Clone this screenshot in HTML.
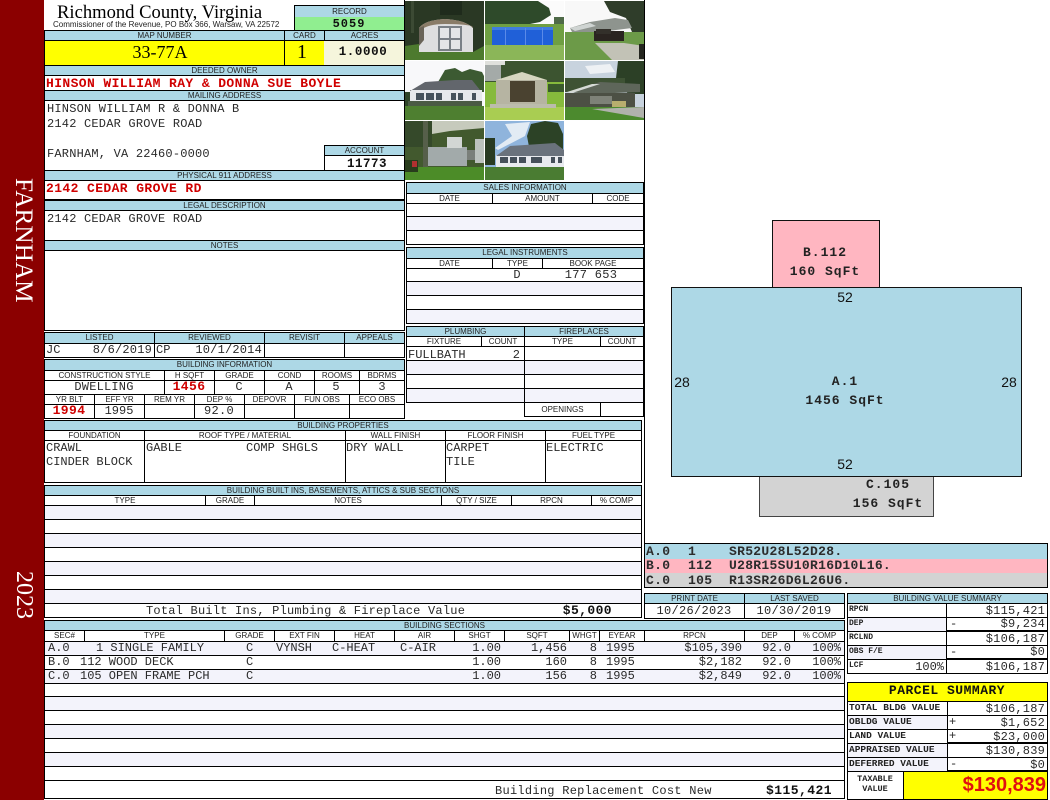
<!DOCTYPE html>
<html><head><meta charset="utf-8"><title>Richmond County, Virginia</title>
<style>
html,body{margin:0;padding:0;background:#fff}
body{position:relative;width:1050px;height:800px;overflow:hidden}
div,span,svg{position:absolute;box-sizing:border-box}
.h{background:#add8e6;border:1px solid #000;font:8px/9px "Liberation Sans",sans-serif;text-align:center;color:#222;white-space:nowrap}
.s{background:#fff;border:1px solid #000;font:8px/9px "Liberation Sans",sans-serif;text-align:center;color:#222;white-space:nowrap}
.c{background:#fff;border:1px solid #000}
.a{background:#f3f3fb;border:1px solid #000}
.t{font:12px/14px "Liberation Mono",monospace;color:#2a2a2a;white-space:pre}
.b{font-weight:bold;color:#111}
.x{font:bold 13px/14px "Liberation Mono",monospace;color:#d00000;letter-spacing:.4px;white-space:pre}
.m{transform:translateX(-50%)}
.k{font:bold 8px/10px "Liberation Mono",monospace;color:#222;white-space:pre}
.f{font:bold 13px/15px "Liberation Mono",monospace;color:#2c2c2c;letter-spacing:.3px;white-space:pre}
.g{font:bold 13px/15px "Liberation Mono",monospace;color:#222;letter-spacing:1px;white-space:pre;transform:translateX(-50%)}
.n{font:14px/15px "Liberation Sans",sans-serif;color:#111;white-space:pre;transform:translateX(-50%)}
</style></head><body>

<!-- sidebar -->
<div style="left:0;top:0;width:44px;height:800px;background:#8b0000"></div>
<div style="left:9px;top:178px;width:30px;height:130px;writing-mode:vertical-rl;font:25.3px/30px 'Liberation Serif',serif;color:#fff;white-space:nowrap">FARNHAM</div>
<div style="left:9px;top:571px;width:30px;height:60px;writing-mode:vertical-rl;font:24px/30px 'Liberation Serif',serif;color:#fff;white-space:nowrap">2023</div>

<!-- title -->
<span style="left:57px;top:2px;font:18.6px/21px 'Liberation Serif',serif;color:#000;white-space:nowrap">Richmond County, Virginia</span>
<span style="left:53px;top:20px;font:8px/10px 'Liberation Sans',sans-serif;color:#222;white-space:nowrap">Commissioner of the Revenue, PO Box 366, Warsaw, VA 22572</span>
<div class="h" style="left:294px;top:5px;width:111px;height:13px;line-height:11px">RECORD</div>
<div style="left:294px;top:17px;width:111px;height:14px;background:#90ee90;border-left:1px solid #000"></div>
<span class="t b m" style="left:349px;top:17px;letter-spacing:1px">5059</span>

<!-- map row -->
<div class="h" style="left:44px;top:30px;width:241px;height:11px">MAP NUMBER</div>
<div class="h" style="left:284px;top:30px;width:41px;height:11px">CARD</div>
<div class="h" style="left:324px;top:30px;width:81px;height:11px">ACRES</div>
<div style="left:44px;top:40px;width:241px;height:26px;background:#ffff00;border:1px solid #000"></div>
<div style="left:284px;top:40px;width:41px;height:26px;background:#ffff00;border:1px solid #000"></div>
<div style="left:324px;top:40px;width:81px;height:26px;background:#f5f5dc;border:1px solid #000;border-left:0"></div>
<span class="m" style="left:160px;top:42px;font:18px/21px 'Liberation Serif',serif;color:#000">33-77A</span>
<span class="m" style="left:302px;top:41px;font:20px/23px 'Liberation Serif',serif;color:#000">1</span>
<span class="t b m" style="left:363px;top:45px;font-size:12.5px;letter-spacing:.6px">1.0000</span>

<!-- owner -->
<div class="c" style="left:44px;top:65px;width:361px;height:135px"></div>
<div class="h" style="left:44px;top:65px;width:361px;height:11px">DEEDED OWNER</div>
<span class="x" style="left:46px;top:77px">HINSON WILLIAM RAY &amp; DONNA SUE BOYLE</span>
<div class="h" style="left:44px;top:90px;width:361px;height:11px">MAILING ADDRESS</div>
<span class="t" style="left:47px;top:102px;letter-spacing:.2px">HINSON WILLIAM R &amp; DONNA B</span>
<span class="t" style="left:47px;top:117px;letter-spacing:.2px">2142 CEDAR GROVE ROAD</span>
<span class="t" style="left:47px;top:147px;letter-spacing:.2px">FARNHAM, VA 22460-0000</span>
<div class="h" style="left:324px;top:145px;width:81px;height:11px">ACCOUNT</div>
<div class="c" style="left:324px;top:155px;width:81px;height:16px"></div>
<span class="t b m" style="left:367px;top:157px;letter-spacing:.5px;font-size:12.5px">11773</span>
<div class="h" style="left:44px;top:170px;width:361px;height:11px">PHYSICAL 911 ADDRESS</div>
<span class="x" style="left:46px;top:182px">2142 CEDAR GROVE RD</span>

<!-- legal/notes -->
<div class="c" style="left:44px;top:200px;width:361px;height:41px"></div>
<div class="h" style="left:44px;top:200px;width:361px;height:11px">LEGAL DESCRIPTION</div>
<span class="t" style="left:47px;top:212px;letter-spacing:.2px">2142 CEDAR GROVE ROAD</span>
<div class="c" style="left:44px;top:240px;width:361px;height:91px"></div>
<div class="h" style="left:44px;top:240px;width:361px;height:11px">NOTES</div>

<!-- listed -->
<div class="h" style="left:44px;top:332px;width:111px;height:12px">LISTED</div>
<div class="h" style="left:154px;top:332px;width:111px;height:12px">REVIEWED</div>
<div class="h" style="left:264px;top:332px;width:81px;height:12px">REVISIT</div>
<div class="h" style="left:344px;top:332px;width:61px;height:12px">APPEALS</div>
<div class="c" style="left:44px;top:343px;width:111px;height:15px"></div>
<div class="c" style="left:154px;top:343px;width:111px;height:15px"></div>
<div class="c" style="left:264px;top:343px;width:81px;height:15px"></div>
<div class="c" style="left:344px;top:343px;width:61px;height:15px"></div>
<span class="t" style="left:46px;top:343px">JC</span>
<span class="t" style="right:898px;top:343px;letter-spacing:.2px">8/6/2019</span>
<span class="t" style="left:156px;top:343px">CP</span>
<span class="t" style="right:788px;top:343px;letter-spacing:.2px">10/1/2014</span>

<!-- building information -->
<div class="h" style="left:44px;top:359px;width:361px;height:12px">BUILDING INFORMATION</div>
<div class="s" style="left:44px;top:370px;width:121px;height:11px">CONSTRUCTION STYLE</div>
<div class="s" style="left:164px;top:370px;width:51px;height:11px">H SQFT</div>
<div class="s" style="left:214px;top:370px;width:51px;height:11px">GRADE</div>
<div class="s" style="left:264px;top:370px;width:51px;height:11px">COND</div>
<div class="s" style="left:314px;top:370px;width:46px;height:11px">ROOMS</div>
<div class="s" style="left:359px;top:370px;width:46px;height:11px">BDRMS</div>
<div class="c" style="left:44px;top:380px;width:121px;height:15px"></div>
<div class="c" style="left:164px;top:380px;width:51px;height:15px"></div>
<div class="c" style="left:214px;top:380px;width:51px;height:15px"></div>
<div class="c" style="left:264px;top:380px;width:51px;height:15px"></div>
<div class="c" style="left:314px;top:380px;width:46px;height:15px"></div>
<div class="c" style="left:359px;top:380px;width:46px;height:15px"></div>
<span class="t m" style="left:104px;top:380px;letter-spacing:.2px">DWELLING</span>
<span class="x m" style="left:189px;top:380px">1456</span>
<span class="t m" style="left:239px;top:380px">C</span>
<span class="t m" style="left:289px;top:380px">A</span>
<span class="t m" style="left:336px;top:380px">5</span>
<span class="t m" style="left:382px;top:380px">3</span>
<div class="s" style="left:44px;top:394px;width:51px;height:11px">YR BLT</div>
<div class="s" style="left:94px;top:394px;width:51px;height:11px">EFF YR</div>
<div class="s" style="left:144px;top:394px;width:51px;height:11px">REM YR</div>
<div class="s" style="left:194px;top:394px;width:51px;height:11px">DEP %</div>
<div class="s" style="left:244px;top:394px;width:51px;height:11px">DEPOVR</div>
<div class="s" style="left:294px;top:394px;width:56px;height:11px">FUN OBS</div>
<div class="s" style="left:349px;top:394px;width:56px;height:11px">ECO OBS</div>
<div class="c" style="left:44px;top:404px;width:51px;height:15px"></div>
<div class="c" style="left:94px;top:404px;width:51px;height:15px"></div>
<div class="c" style="left:144px;top:404px;width:51px;height:15px"></div>
<div class="c" style="left:194px;top:404px;width:51px;height:15px"></div>
<div class="c" style="left:244px;top:404px;width:51px;height:15px"></div>
<div class="c" style="left:294px;top:404px;width:56px;height:15px"></div>
<div class="c" style="left:349px;top:404px;width:56px;height:15px"></div>
<span class="x m" style="left:69px;top:404px">1994</span>
<span class="t m" style="left:119px;top:404px">1995</span>
<span class="t m" style="left:219px;top:404px;letter-spacing:.3px">92.0</span>

<!-- photos -->
<svg style="left:405px;top:0" width="240" height="181" viewBox="405 0 240 181">
<defs>
<clipPath id="p1"><rect x="405" y="1" width="79" height="59"/></clipPath>
<clipPath id="p2"><rect x="485" y="1" width="79" height="59"/></clipPath>
<clipPath id="p3"><rect x="565" y="1" width="79" height="59"/></clipPath>
<clipPath id="p4"><rect x="405" y="61" width="79" height="59"/></clipPath>
<clipPath id="p5"><rect x="485" y="61" width="79" height="59"/></clipPath>
<clipPath id="p6"><rect x="565" y="61" width="79" height="59"/></clipPath>
<clipPath id="p7"><rect x="405" y="121" width="79" height="59"/></clipPath>
<clipPath id="p8"><rect x="485" y="121" width="79" height="59"/></clipPath>
</defs>
<rect x="405" y="0" width="240" height="181" fill="#fff"/>
<!-- 1 shed -->
<g clip-path="url(#p1)">
<rect x="405" y="1" width="79" height="59" fill="#2a3824"/>
<rect x="440" y="1" width="22" height="14" fill="#1f2b1c"/>
<rect x="411" y="1" width="3" height="32" fill="#3c4a34"/>
<path d="M405 46L419 44V52L473 52L484 46V60H405Z" fill="#4d7a2e"/>
<path d="M419 28Q425 20 445 19Q465 20 473 28V52H419Z" fill="#dededf"/>
<path d="M419 28Q425 20 445 19Q465 20 473 28L472 26Q462 24 445 24Q428 24 421 30Z" fill="#8a7c68"/>
<path d="M419 28L424 26V40L419 46Z" fill="#6a6458"/>
<rect x="438" y="26" width="24" height="25" fill="#7a8086"/>
<rect x="440" y="28" width="9" height="10" fill="#e4e5e7"/><rect x="451" y="28" width="9" height="10" fill="#e4e5e7"/>
<rect x="440" y="40" width="9" height="9" fill="#e4e5e7"/><rect x="451" y="40" width="9" height="9" fill="#e4e5e7"/>
</g>
<!-- 2 pool -->
<g clip-path="url(#p2)">
<rect x="485" y="1" width="79" height="59" fill="#fbfbfb"/>
<path d="M485 1H538L549 8L551 15L540 22L525 25H485Z" fill="#2e4a2a"/>
<rect x="554" y="17" width="10" height="9" fill="#4f6a48"/>
<rect x="485" y="24" width="79" height="22" fill="#6f9f42"/>
<rect x="485" y="45" width="79" height="15" fill="#8bb658"/>
<rect x="492" y="28" width="61" height="17" fill="#2060d8"/>
<rect x="492" y="27" width="61" height="3" fill="#3f7ce0"/>
<rect x="505" y="28" width="1" height="17" fill="#5a8ae8"/><rect x="525" y="28" width="1" height="17" fill="#5a8ae8"/><rect x="542" y="28" width="1" height="17" fill="#5a8ae8"/>
</g>
<!-- 3 carport -->
<g clip-path="url(#p3)">
<rect x="565" y="1" width="79" height="59" fill="#f8f8f8"/>
<path d="M604 1H644V36L632 32L626 18L610 12Z" fill="#2f3d2a"/>
<rect x="565" y="32" width="79" height="28" fill="#6c9a48"/>
<path d="M570 28L590 22L615 18L628 20L632 28L600 32H572Z" fill="#8e948e"/>
<path d="M570 28L590 23L596 26L575 31Z" fill="#cfd4d2"/>
<path d="M595 43L624 43L644 46V60H612Z" fill="#c2c2b6"/>
<rect x="594" y="31" width="30" height="10" fill="#2a2420"/>
<rect x="596" y="29" width="15" height="5" fill="#33302a"/>
<rect x="639" y="44" width="5" height="15" fill="#24261f"/>
</g>
<!-- 4 house -->
<g clip-path="url(#p4)">
<rect x="405" y="61" width="79" height="59" fill="#f8f8fa"/>
<path d="M438 82L445 70L455 68L462 72L470 69L482 72L484 76V92H438Z" fill="#3c5a32"/>
<rect x="405" y="92" width="5" height="14" fill="#2e4428"/>
<rect x="410" y="90" width="72" height="17" fill="#e6e8ec"/>
<path d="M410 91L425 82L455 80L472 80L480 90H410Z" fill="#62666c"/>
<rect x="416" y="93" width="8" height="7" fill="#46525c"/><rect x="426" y="93" width="8" height="7" fill="#46525c"/><rect x="436" y="93" width="6" height="7" fill="#46525c"/><rect x="451" y="93" width="5" height="7" fill="#46525c"/><rect x="458" y="93" width="5" height="7" fill="#46525c"/><rect x="472" y="93" width="4" height="7" fill="#46525c"/>
<rect x="408" y="101" width="74" height="5" fill="#4a5a44"/>
<rect x="405" y="106" width="79" height="14" fill="#4e7f30"/>
</g>
<!-- 5 concrete shed -->
<g clip-path="url(#p5)">
<rect x="485" y="61" width="79" height="59" fill="#3c5430"/>
<rect x="485" y="64" width="16" height="17" fill="#a4aaa8"/>
<rect x="485" y="61" width="20" height="4" fill="#dfe0dc"/>
<rect x="485" y="82" width="79" height="26" fill="#86ba3c"/>
<rect x="548" y="84" width="16" height="8" fill="#3a5a2c"/>
<rect x="485" y="107" width="79" height="13" fill="#a9cd52"/>
<path d="M496 80L522 72L547 80Z" fill="#d6d6c0"/>
<rect x="496" y="80" width="51" height="26" fill="#b6b4a2"/>
<rect x="510" y="81" width="25" height="21" fill="#4a4230"/>
<rect x="490" y="104" width="66" height="4" fill="#bcbcac"/>
</g>
<!-- 6 carport 2 -->
<g clip-path="url(#p6)">
<rect x="565" y="61" width="79" height="59" fill="#c8d3de"/>
<path d="M585 66L610 64L615 72L590 74Z" fill="#eef1f4"/>
<path d="M618 61H644V94H628L616 78Z" fill="#2c4026"/>
<rect x="565" y="78" width="60" height="14" fill="#3e5234"/>
<path d="M567 92L600 82L640 84V92L590 94Z" fill="#5e665a"/>
<path d="M567 92L592 84L600 84L572 93Z" fill="#d6dad6"/>
<rect x="565" y="93" width="70" height="14" fill="#4c5044"/>
<rect x="590" y="96" width="22" height="8" fill="#7e8278"/>
<rect x="612" y="101" width="14" height="7" fill="#b8ae6e"/>
<rect x="565" y="107" width="79" height="13" fill="#4c8a2e"/>
<path d="M592 109L644 107V118Z" fill="#b0b2ac"/>
</g>
<!-- 7 silo building -->
<g clip-path="url(#p7)">
<rect x="405" y="121" width="79" height="59" fill="#c6cabc"/>
<path d="M405 121H432V134L450 131L484 128V168H405Z" fill="#42592e"/>
<rect x="405" y="121" width="27" height="26" fill="#35492a"/>
<rect x="428" y="147" width="39" height="19" fill="#a2aaaa"/>
<rect x="447" y="137" width="15" height="11" fill="#d2d6d4"/>
<rect x="467" y="150" width="8" height="10" fill="#7a7f7a"/>
<rect x="475" y="139" width="9" height="24" fill="#bcc2be"/>
<rect x="423" y="121" width="5" height="54" fill="#565f4a"/>
<rect x="405" y="167" width="79" height="13" fill="#4c8c28"/>
<rect x="405" y="160" width="13" height="12" fill="#283c1c"/>
<rect x="412" y="161" width="5" height="6" fill="#b03030"/>
</g>
<!-- 8 house 2 -->
<g clip-path="url(#p8)">
<rect x="485" y="121" width="79" height="59" fill="#8fb4dc"/>
<path d="M505 124L530 122L525 136L498 150L495 148L512 136Z" fill="#e2ebf4"/>
<path d="M527 136L531 124L545 121L558 123L563 134V152H530Z" fill="#2c4226"/>
<rect x="485" y="138" width="10" height="27" fill="#283a22"/>
<rect x="496" y="155" width="68" height="13" fill="#e8eaee"/>
<path d="M496 156L510 146L555 143L564 150V156Z" fill="#6a727c"/>
<rect x="500" y="157" width="8" height="6" fill="#46505a"/><rect x="510" y="157" width="7" height="6" fill="#46505a"/><rect x="519" y="157" width="7" height="6" fill="#46505a"/><rect x="531" y="157" width="11" height="6" fill="#46505a"/><rect x="551" y="157" width="4" height="6" fill="#46505a"/><rect x="558" y="157" width="4" height="6" fill="#46505a"/>
<rect x="485" y="167" width="79" height="13" fill="#4a7c32"/>
</g>
</svg>
<div style="left:404px;top:0;width:1px;height:182px;background:#000"></div>
<div style="left:644px;top:0;width:1px;height:544px;background:#000"></div>

<!-- sales -->
<div class="c" style="left:406px;top:182px;width:238px;height:63px"></div>
<div class="h" style="left:406px;top:182px;width:238px;height:12px">SALES INFORMATION</div>
<div class="s" style="left:406px;top:193px;width:87px;height:11px">DATE</div>
<div class="s" style="left:492px;top:193px;height:11px;width:101px">AMOUNT</div>
<div class="s" style="left:592px;top:193px;width:52px;height:11px">CODE</div>
<div class="a" style="left:406px;top:216px;width:238px;height:15px"></div>

<!-- legal instruments -->
<div class="c" style="left:406px;top:247px;width:238px;height:77px"></div>
<div class="h" style="left:406px;top:247px;width:238px;height:12px">LEGAL INSTRUMENTS</div>
<div class="s" style="left:406px;top:258px;width:87px;height:11px">DATE</div>
<div class="s" style="left:492px;top:258px;width:51px;height:11px">TYPE</div>
<div class="s" style="left:542px;top:258px;width:102px;height:11px">BOOK PAGE</div>
<div class="a" style="left:406px;top:281px;width:238px;height:15px"></div>
<div class="a" style="left:406px;top:309px;width:238px;height:15px"></div>
<div class="c" style="left:406px;top:295px;width:238px;height:15px"></div>
<span class="t m" style="left:517px;top:268px">D</span>
<span class="t m" style="left:591px;top:268px;letter-spacing:.3px">177 653</span>

<!-- plumbing / fireplaces -->
<div class="h" style="left:406px;top:326px;width:119px;height:11px">PLUMBING</div>
<div class="h" style="left:524px;top:326px;width:120px;height:11px">FIREPLACES</div>
<div class="s" style="left:406px;top:336px;width:76px;height:11px">FIXTURE</div>
<div class="s" style="left:481px;top:336px;width:44px;height:11px">COUNT</div>
<div class="s" style="left:524px;top:336px;width:77px;height:11px">TYPE</div>
<div class="s" style="left:600px;top:336px;width:44px;height:11px">COUNT</div>
<div class="c" style="left:406px;top:346px;width:119px;height:15px"></div>
<div class="a" style="left:406px;top:360px;width:119px;height:15px"></div>
<div class="c" style="left:406px;top:374px;width:119px;height:15px"></div>
<div class="a" style="left:406px;top:388px;width:119px;height:15px"></div>
<div class="c" style="left:524px;top:346px;width:120px;height:15px"></div>
<div class="a" style="left:524px;top:360px;width:120px;height:15px"></div>
<div class="c" style="left:524px;top:374px;width:120px;height:15px"></div>
<div class="a" style="left:524px;top:388px;width:120px;height:15px"></div>
<div class="s" style="left:524px;top:402px;width:77px;height:15px;line-height:13px">OPENINGS</div>
<div class="c" style="left:600px;top:402px;width:44px;height:15px"></div>
<span class="t" style="left:408px;top:348px">FULLBATH</span>
<span class="t" style="right:530px;top:348px">2</span>

<!-- building properties -->
<div class="c" style="left:44px;top:420px;width:598px;height:63px"></div>
<div class="h" style="left:44px;top:420px;width:598px;height:11px">BUILDING PROPERTIES</div>
<div class="s" style="left:44px;top:430px;width:101px;height:11px">FOUNDATION</div>
<div class="s" style="left:144px;top:430px;width:202px;height:11px">ROOF TYPE / MATERIAL</div>
<div class="s" style="left:345px;top:430px;width:101px;height:11px">WALL FINISH</div>
<div class="s" style="left:445px;top:430px;width:101px;height:11px">FLOOR FINISH</div>
<div class="s" style="left:545px;top:430px;width:97px;height:11px">FUEL TYPE</div>
<div style="left:144px;top:440px;width:1px;height:43px;background:#000"></div>
<div style="left:345px;top:440px;width:1px;height:43px;background:#000"></div>
<div style="left:445px;top:440px;width:1px;height:43px;background:#000"></div>
<div style="left:545px;top:440px;width:1px;height:43px;background:#000"></div>
<span class="t" style="left:46px;top:441px">CRAWL</span>
<span class="t" style="left:46px;top:455px">CINDER BLOCK</span>
<span class="t" style="left:146px;top:441px">GABLE</span>
<span class="t" style="left:246px;top:441px">COMP SHGLS</span>
<span class="t" style="left:346px;top:441px">DRY WALL</span>
<span class="t" style="left:446px;top:441px">CARPET</span>
<span class="t" style="left:446px;top:455px">TILE</span>
<span class="t" style="left:546px;top:441px">ELECTRIC</span>

<!-- built-ins -->
<div class="c" style="left:44px;top:485px;width:598px;height:133px"></div>
<div class="h" style="left:44px;top:485px;width:598px;height:11px">BUILDING BUILT INS, BASEMENTS, ATTICS &amp; SUB SECTIONS</div>
<div class="s" style="left:44px;top:495px;width:162px;height:11px">TYPE</div>
<div class="s" style="left:205px;top:495px;width:50px;height:11px">GRADE</div>
<div class="s" style="left:254px;top:495px;width:188px;height:11px">NOTES</div>
<div class="s" style="left:441px;top:495px;width:71px;height:11px">QTY / SIZE</div>
<div class="s" style="left:511px;top:495px;width:81px;height:11px">RPCN</div>
<div class="s" style="left:591px;top:495px;width:51px;height:11px">% COMP</div>
<div class="a" style="left:44px;top:505px;width:598px;height:15px"></div>
<div class="c" style="left:44px;top:519px;width:598px;height:15px"></div>
<div class="a" style="left:44px;top:533px;width:598px;height:15px"></div>
<div class="c" style="left:44px;top:547px;width:598px;height:15px"></div>
<div class="a" style="left:44px;top:561px;width:598px;height:15px"></div>
<div class="c" style="left:44px;top:575px;width:598px;height:15px"></div>
<div class="a" style="left:44px;top:589px;width:598px;height:15px"></div>
<span class="t" style="left:146px;top:604px;letter-spacing:.22px">Total Built Ins, Plumbing &amp; Fireplace Value</span>
<span class="t b" style="right:438px;top:604px;letter-spacing:.4px;font-size:13px">$5,000</span>

<!-- building sections -->
<div class="c" style="left:44px;top:620px;width:801px;height:179px"></div>
<div class="h" style="left:44px;top:620px;width:801px;height:11px">BUILDING SECTIONS</div>
<div class="s" style="left:44px;top:630px;width:41px;height:12px">SEC#</div>
<div class="s" style="left:84px;top:630px;width:141px;height:12px">TYPE</div>
<div class="s" style="left:224px;top:630px;width:51px;height:12px">GRADE</div>
<div class="s" style="left:274px;top:630px;width:61px;height:12px">EXT FIN</div>
<div class="s" style="left:334px;top:630px;width:61px;height:12px">HEAT</div>
<div class="s" style="left:394px;top:630px;width:61px;height:12px">AIR</div>
<div class="s" style="left:454px;top:630px;width:51px;height:12px">SHGT</div>
<div class="s" style="left:504px;top:630px;width:66px;height:12px">SQFT</div>
<div class="s" style="left:569px;top:630px;width:31px;height:12px">WHGT</div>
<div class="s" style="left:599px;top:630px;width:46px;height:12px">EYEAR</div>
<div class="s" style="left:644px;top:630px;width:101px;height:12px">RPCN</div>
<div class="s" style="left:744px;top:630px;width:51px;height:12px">DEP</div>
<div class="s" style="left:794px;top:630px;width:51px;height:12px">% COMP</div>
<div class="a" style="left:44px;top:641px;width:801px;height:15px"></div>
<div class="c" style="left:44px;top:655px;width:801px;height:15px"></div>
<div class="a" style="left:44px;top:669px;width:801px;height:15px"></div>
<div class="c" style="left:44px;top:683px;width:801px;height:14px"></div>
<div class="a" style="left:44px;top:696px;width:801px;height:15px"></div>
<div class="c" style="left:44px;top:710px;width:801px;height:15px"></div>
<div class="a" style="left:44px;top:724px;width:801px;height:15px"></div>
<div class="c" style="left:44px;top:738px;width:801px;height:15px"></div>
<div class="a" style="left:44px;top:752px;width:801px;height:15px"></div>
<div class="c" style="left:44px;top:766px;width:801px;height:15px"></div>

<span class="t" style="left:48px;top:641px">A.0</span><span class="t" style="left:96px;top:641px">1 SINGLE FAMILY</span><span class="t" style="left:246px;top:641px">C</span><span class="t" style="left:276px;top:641px">VYNSH</span><span class="t" style="left:332px;top:641px">C-HEAT</span><span class="t" style="left:400px;top:641px">C-AIR</span><span class="t" style="right:549px;top:641px">1.00</span><span class="t" style="right:483px;top:641px">1,456</span><span class="t" style="right:453px;top:641px">8</span><span class="t" style="left:606px;top:641px">1995</span><span class="t" style="right:308px;top:641px">$105,390</span><span class="t" style="right:259px;top:641px">92.0</span><span class="t" style="right:209px;top:641px">100%</span>
<span class="t" style="left:48px;top:655px">B.0</span><span class="t" style="left:80px;top:655px">112 WOOD DECK</span><span class="t" style="left:246px;top:655px">C</span><span class="t" style="right:549px;top:655px">1.00</span><span class="t" style="right:483px;top:655px">160</span><span class="t" style="right:453px;top:655px">8</span><span class="t" style="left:606px;top:655px">1995</span><span class="t" style="right:308px;top:655px">$2,182</span><span class="t" style="right:259px;top:655px">92.0</span><span class="t" style="right:209px;top:655px">100%</span>
<span class="t" style="left:48px;top:669px">C.0</span><span class="t" style="left:80px;top:669px">105 OPEN FRAME PCH</span><span class="t" style="left:246px;top:669px">C</span><span class="t" style="right:549px;top:669px">1.00</span><span class="t" style="right:483px;top:669px">156</span><span class="t" style="right:453px;top:669px">8</span><span class="t" style="left:606px;top:669px">1995</span><span class="t" style="right:308px;top:669px">$2,849</span><span class="t" style="right:259px;top:669px">92.0</span><span class="t" style="right:209px;top:669px">100%</span>

<span class="t" style="left:495px;top:784px;letter-spacing:.27px">Building Replacement Cost New</span>
<span class="t b" style="right:218px;top:784px;font-size:13px;letter-spacing:.45px">$115,421</span>

<!-- sketch -->
<div style="left:772px;top:220px;width:108px;height:68px;background:#ffb6c1;border:1px solid #111"></div>
<div style="left:759px;top:475px;width:175px;height:42px;background:#d3d3d3;border:1px solid #444;border-top-color:#111"></div>
<div style="left:671px;top:287px;width:351px;height:190px;background:#add8e6;border:1px solid #111"></div>
<span class="g" style="left:825px;top:245px">B.112</span>
<span class="g" style="left:825px;top:264px">160 SqFt</span>
<span class="n" style="left:845px;top:290px">52</span>
<span class="n" style="left:682px;top:375px">28</span>
<span class="n" style="left:1009px;top:375px">28</span>
<span class="g" style="left:845px;top:374px">A.1</span>
<span class="g" style="left:845px;top:393px">1456 SqFt</span>
<span class="n" style="left:845px;top:457px">52</span>
<span class="g" style="left:888px;top:477px">C.105</span>
<span class="g" style="left:888px;top:496px">156 SqFt</span>

<!-- sketch code -->
<div style="left:644px;top:543px;width:404px;height:45px;border:1px solid #000;background:#d3d3d3"></div>
<div style="left:645px;top:544px;width:402px;height:15px;background:#add8e6"></div>
<div style="left:645px;top:559px;width:402px;height:14px;background:#ffb6c1"></div>
<span class="f" style="left:646px;top:544px">A.0</span><span class="f" style="left:688px;top:544px">1</span><span class="f" style="left:729px;top:544px">SR52U28L52D28.</span>
<span class="f" style="left:646px;top:558px">B.0</span><span class="f" style="left:688px;top:558px">112</span><span class="f" style="left:729px;top:558px">U28R15SU10R16D10L16.</span>
<span class="f" style="left:646px;top:573px">C.0</span><span class="f" style="left:688px;top:573px">105</span><span class="f" style="left:729px;top:573px">R13SR26D6L26U6.</span>

<!-- print date -->
<div class="h" style="left:644px;top:593px;width:101px;height:11px">PRINT DATE</div>
<div class="h" style="left:744px;top:593px;width:101px;height:11px">LAST SAVED</div>
<div class="c" style="left:644px;top:603px;width:101px;height:16px"></div>
<div class="c" style="left:744px;top:603px;width:101px;height:16px"></div>
<span class="t m" style="left:694px;top:604px;letter-spacing:.3px">10/26/2023</span>
<span class="t m" style="left:794px;top:604px;letter-spacing:.3px">10/30/2019</span>

<!-- building value summary -->
<div class="h" style="left:847px;top:593px;width:201px;height:11px">BUILDING VALUE SUMMARY</div>
<div class="c" style="left:847px;top:603px;width:100px;height:15px"></div>
<div class="a" style="left:847px;top:617px;width:100px;height:15px"></div>
<div class="c" style="left:847px;top:631px;width:100px;height:15px"></div>
<div class="a" style="left:847px;top:645px;width:100px;height:15px"></div>
<div class="c" style="left:847px;top:659px;width:100px;height:15px"></div>
<div class="c" style="left:946px;top:603px;width:102px;height:15px"></div>
<div class="c" style="left:946px;top:617px;width:102px;height:15px;border-bottom-width:2px"></div>
<div class="c" style="left:946px;top:631px;width:102px;height:15px"></div>
<div class="c" style="left:946px;top:645px;width:102px;height:15px;border-bottom-width:2px"></div>
<div class="c" style="left:946px;top:659px;width:102px;height:15px"></div>
<span class="k" style="left:849px;top:605px">RPCN</span><span class="t" style="right:5px;top:604px;letter-spacing:.2px">$115,421</span>
<span class="k" style="left:849px;top:619px">DEP</span><span class="t" style="left:950px;top:617px">-</span><span class="t" style="right:5px;top:617px;letter-spacing:.2px">$9,234</span>
<span class="k" style="left:849px;top:633px">RCLND</span><span class="t" style="right:5px;top:632px;letter-spacing:.2px">$106,187</span>
<span class="k" style="left:849px;top:647px">OBS F/E</span><span class="t" style="left:950px;top:645px">-</span><span class="t" style="right:5px;top:645px;letter-spacing:.2px">$0</span>
<span class="k" style="left:849px;top:661px">LCF</span><span class="t" style="right:106px;top:660px">100%</span><span class="t" style="right:5px;top:660px;letter-spacing:.2px">$106,187</span>

<!-- parcel summary -->
<div style="left:847px;top:682px;width:201px;height:20px;background:#ffff00;border:1px solid #000"></div>
<span class="t b m" style="left:947px;top:684px;font-size:13px;letter-spacing:.5px">PARCEL SUMMARY</span>
<div class="c" style="left:847px;top:701px;width:101px;height:15px"></div>
<div class="a" style="left:847px;top:715px;width:101px;height:15px"></div>
<div class="c" style="left:847px;top:729px;width:101px;height:15px"></div>
<div class="a" style="left:847px;top:743px;width:101px;height:15px"></div>
<div class="a" style="left:847px;top:757px;width:101px;height:15px"></div>
<div class="c" style="left:947px;top:701px;width:101px;height:15px"></div>
<div class="c" style="left:947px;top:715px;width:101px;height:15px"></div>
<div class="c" style="left:947px;top:729px;width:101px;height:15px;border-bottom-width:2px"></div>
<div class="c" style="left:947px;top:743px;width:101px;height:15px"></div>
<div class="c" style="left:947px;top:757px;width:101px;height:15px;border-bottom-width:2px"></div>
<span class="k" style="left:849px;top:703px;font-size:9.5px">TOTAL BLDG VALUE</span><span class="t" style="right:5px;top:702px;letter-spacing:.2px">$106,187</span>
<span class="k" style="left:849px;top:717px;font-size:9.5px">OBLDG VALUE</span><span class="t" style="left:949px;top:715px">+</span><span class="t" style="right:5px;top:716px;letter-spacing:.2px">$1,652</span>
<span class="k" style="left:849px;top:731px;font-size:9.5px">LAND VALUE</span><span class="t" style="left:949px;top:729px">+</span><span class="t" style="right:5px;top:730px;letter-spacing:.2px">$23,000</span>
<span class="k" style="left:849px;top:745px;font-size:9.5px">APPRAISED VALUE</span><span class="t" style="right:5px;top:744px;letter-spacing:.2px">$130,839</span>
<span class="k" style="left:849px;top:759px;font-size:9.5px">DEFERRED VALUE</span><span class="t" style="left:950px;top:757px">-</span><span class="t" style="right:5px;top:758px;letter-spacing:.2px">$0</span>
<div class="c" style="left:847px;top:771px;width:57px;height:29px"></div>
<div style="left:903px;top:771px;width:145px;height:29px;background:#ffff00;border:1px solid #000"></div>
<span class="k m" style="left:875px;top:774px;font-size:8.5px">TAXABLE</span>
<span class="k m" style="left:875px;top:784px;font-size:8.5px">VALUE</span>
<span style="right:4px;top:773px;font:bold 20px/24px 'Liberation Sans',sans-serif;color:#e01010;white-space:nowrap">$130,839</span>
</body></html>
